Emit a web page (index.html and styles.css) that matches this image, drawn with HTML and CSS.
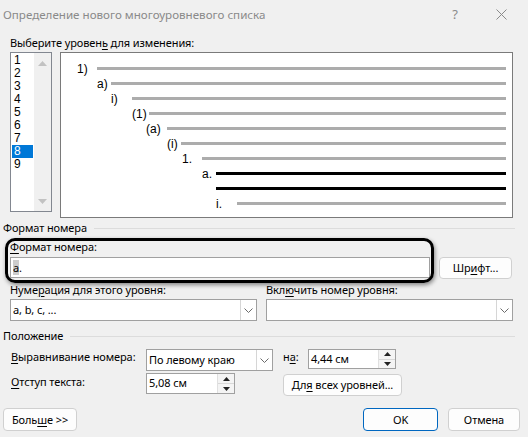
FILE: index.html
```html
<!DOCTYPE html>
<html lang="ru">
<head>
<meta charset="utf-8">
<title>Определение нового многоуровневого списка</title>
<link rel="stylesheet" href="styles.css">
</head>
<body>
<div class="window">
  <div class="titlebar">
    <span class="title">Определение нового многоуровневого списка</span>
    <span class="tb-btn">?</span>
    <span class="tb-btn"><svg width="11" height="11" viewBox="0 0 11 11"><path d="M0.5 0.5L10.5 10.5M10.5 0.5L0.5 10.5" stroke="#8a8a8a" stroke-width="1" fill="none"/></svg></span>
  </div>

  <div class="lbl lbl-top">Выберите уровен<u>ь</u> для изменения:</div>
  <div class="level-row">
    <div class="listbox">
      <ul class="levels">
        <li>1</li><li>2</li><li>3</li><li>4</li><li>5</li><li>6</li><li>7</li><li class="sel">8</li><li>9</li>
      </ul>
      <div class="vscroll">
        <svg width="9" height="5" viewBox="0 0 9 5"><path d="M0 5L4.5 0L9 5Z" fill="#c2c2c2"/></svg>
        <svg width="9" height="5" viewBox="0 0 9 5"><path d="M0 0L4.5 5L9 0Z" fill="#c2c2c2"/></svg>
      </div>
    </div>
    <div class="preview">
      <div class="prow p1"><span class="ptxt">1)</span><span class="pline"></span></div>
      <div class="prow p2"><span class="ptxt">a)</span><span class="pline"></span></div>
      <div class="prow p3"><span class="ptxt">i)</span><span class="pline"></span></div>
      <div class="prow p4"><span class="ptxt">(1)</span><span class="pline"></span></div>
      <div class="prow p5"><span class="ptxt">(a)</span><span class="pline"></span></div>
      <div class="prow p6"><span class="ptxt">(i)</span><span class="pline"></span></div>
      <div class="prow p7"><span class="ptxt">1.</span><span class="pline"></span></div>
      <div class="prow p8"><span class="ptxt">a.</span><span class="pline dark"></span></div>
      <div class="prow p9"><span class="ptxt"></span><span class="pline dark"></span></div>
      <div class="prow p10"><span class="ptxt">i.</span><span class="pline"></span></div>
    </div>
  </div>

  <div class="group">Формат номера</div>
  <div class="lbl lbl-fmt"><u>Ф</u>ормат номера:</div>
  <div class="fmt-row">
    <div class="textbox wide"><span class="selected">a</span>.</div>
    <button class="btn btn-font">Шр<u>и</u>фт...</button>
  </div>
  <div class="two-col">
    <div class="lbl">Нуме<u>р</u>ация для этого уровня:</div>
    <div class="lbl">Вкл<u>ю</u>чить номер уровня:</div>
    <div class="combo"><span class="combo-text">a, b, c, ...</span><span class="combo-btn"><svg width="9" height="5" viewBox="0 0 9 5"><path d="M0.5 0.5L4.5 4.5L8.5 0.5" stroke="#6a6a6a" fill="none"/></svg></span></div>
    <div class="combo"><span class="combo-text"></span><span class="combo-btn"><svg width="9" height="5" viewBox="0 0 9 5"><path d="M0.5 0.5L4.5 4.5L8.5 0.5" stroke="#6a6a6a" fill="none"/></svg></span></div>
  </div>

  <div class="group group-pos">Положение</div>
  <div class="pos-grid">
    <div class="lbl"><u>В</u>ыравнивание номера:</div>
    <div class="combo combo-align"><span class="combo-text">По левому краю</span><span class="combo-btn"><svg width="9" height="5" viewBox="0 0 9 5"><path d="M0.5 0.5L4.5 4.5L8.5 0.5" stroke="#6a6a6a" fill="none"/></svg></span></div>
    <div class="lbl lbl-at">н<u>а</u>:</div>
    <div class="spin spin-at"><span class="spin-text">4,44 см</span><span class="spin-btns"><span class="spin-up"><svg width="7" height="4" viewBox="0 0 7 4"><path d="M0 4L3.5 0L7 4Z" fill="#222"/></svg></span><span class="spin-down"><svg width="7" height="4" viewBox="0 0 7 4"><path d="M0 0L3.5 4L7 0Z" fill="#222"/></svg></span></span></div>
    <div class="lbl lbl-row2"><u>О</u>тступ текста:</div>
    <div class="spin spin-indent"><span class="spin-text">5,08 см</span><span class="spin-btns"><span class="spin-up"><svg width="7" height="4" viewBox="0 0 7 4"><path d="M0 4L3.5 0L7 4Z" fill="#222"/></svg></span><span class="spin-down"><svg width="7" height="4" viewBox="0 0 7 4"><path d="M0 0L3.5 4L7 0Z" fill="#222"/></svg></span></span></div>
    <button class="btn btn-all">Дл<u>я</u> всех уровней...</button>
  </div>

  <div class="bottom-row">
    <button class="btn btn-more">Боль<u>ш</u>е &gt;&gt;</button>
    <button class="btn btn-ok">OK</button>
    <button class="btn btn-cancel">Отмена</button>
  </div>

  <div class="callout"></div>
</div>
</body>
</html>
```
FILE: styles.css
```css
html, body {
  margin: 0;
  padding: 0;
}
body {
  width: 528px;
  height: 437px;
  overflow: hidden;
  background: #f0f0f0;
  font-family: "Noto Sans", "Segoe UI", sans-serif;
  font-size: 11px;
  letter-spacing: -0.1px;
  color: #000;
}
.window {
  position: relative;
  width: 528px;
  height: 437px;
}
u {
  text-underline-offset: 2px;
  text-decoration-thickness: 1px;
}
.titlebar {
  height: 28px;
  display: flex;
  align-items: center;
  padding: 0 4px 0 3px;
  color: #8a8a8a;
  font-size: 11.6px;
  letter-spacing: 0;
}
.title {
  flex: 1;
}
.tb-btn {
  width: 46px;
  display: flex;
  justify-content: center;
  align-items: center;
  font-size: 13px;
}
.lbl {
  line-height: 14px;
  height: 14px;
  white-space: nowrap;
}
.lbl-top {
  margin-top: 8px;
  padding-left: 10px;
}
.level-row {
  display: flex;
  align-items: flex-start;
  margin-top: 2px;
  padding-left: 10px;
}
.listbox {
  width: 42px;
  height: 160px;
  box-sizing: border-box;
  border: 1px solid #828790;
  background: #fff;
  display: flex;
}
.levels {
  list-style: none;
  margin: 0;
  padding: 1px 0 0 1px;
  width: 21px;
}
.levels li {
  height: 13px;
  line-height: 13px;
  padding-left: 2px;
  font-family: "Liberation Sans", sans-serif;
  font-size: 12px;
  letter-spacing: 0;
}
.levels li.sel {
  background: #0078d7;
  color: #fff;
}
.vscroll {
  margin-left: auto;
  width: 17px;
  background: #f0f0f0;
  display: flex;
  flex-direction: column;
  justify-content: space-between;
  align-items: center;
  padding: 8px 0 7px;
}
.preview {
  margin-left: 8px;
  width: 453px;
  height: 166px;
  box-sizing: border-box;
  border: 1px solid #7a7a7a;
  background: #fff;
  padding: 8px 6px 6px 0;
  font-family: "Liberation Sans", sans-serif;
  font-size: 12px;
  letter-spacing: 0;
}
.prow {
  height: 15px;
  display: flex;
  align-items: center;
}
.ptxt {
  flex: none;
}
.pline {
  flex: 1;
  height: 3px;
  background: #acacac;
}
.pline.dark {
  background: #000;
}
.p1 { padding-left: 16px; } .p1 .ptxt { width: 20px; }
.p2 { padding-left: 36px; } .p2 .ptxt { width: 14px; }
.p3 { padding-left: 50px; } .p3 .ptxt { width: 21px; }
.p4 { padding-left: 71px; } .p4 .ptxt { width: 17px; }
.p5 { padding-left: 85px; } .p5 .ptxt { width: 21px; }
.p6 { padding-left: 106px; } .p6 .ptxt { width: 14px; }
.p7 { padding-left: 121px; } .p7 .ptxt { width: 20px; }
.p8 { padding-left: 141px; } .p8 .ptxt { width: 14px; }
.p9 { padding-left: 155px; } .p9 .ptxt { width: 0; }
.p10 { padding-left: 155px; } .p10 .ptxt { width: 21px; }

.group {
  display: flex;
  align-items: center;
  height: 14px;
  line-height: 14px;
  margin-top: 3px;
  padding: 0 13px 0 3px;
  white-space: nowrap;
}
.group::after {
  content: "";
  flex: 1;
  height: 1px;
  background: #dcdcdc;
  margin-left: 7px;
}
.lbl-fmt {
  margin-top: 5px;
  padding-left: 10px;
}
.fmt-row {
  display: flex;
  align-items: flex-start;
  gap: 9px;
  margin-top: 3px;
  padding-left: 10px;
  height: 22px;
}
.textbox {
  box-sizing: border-box;
  height: 21px;
  border: 1px solid #a0a0a0;
  background: #fff;
  line-height: 19px;
  padding-left: 2px;
}
.textbox.wide {
  width: 420px;
}
.selected {
  background: #cccccc;
}
.btn {
  box-sizing: border-box;
  height: 22px;
  border: 1px solid #d0d0d0;
  border-radius: 4px;
  background: #fdfdfd;
  font: inherit;
  letter-spacing: inherit;
  color: #000;
  padding: 0;
  text-align: center;
  line-height: 20px;
}
.btn-font {
  width: 73px;
}
.two-col {
  display: grid;
  grid-template-columns: 247px 247px;
  column-gap: 9px;
  row-gap: 2px;
  margin-top: 4px;
  padding-left: 10px;
}
.combo {
  box-sizing: border-box;
  height: 22px;
  border: 1px solid #a0a0a0;
  background: #fff;
  display: flex;
  align-items: stretch;
}
.combo-text {
  flex: 1;
  line-height: 20px;
  padding-left: 2px;
  white-space: nowrap;
}
.combo-btn {
  width: 15px;
  border-left: 1px solid #d6d6d6;
  display: flex;
  align-items: center;
  justify-content: center;
}
.group-pos {
  margin-top: 8px;
}
.pos-grid {
  display: grid;
  grid-template-columns: 135px 127px 35px 94px;
  column-gap: 0;
  row-gap: 2px;
  grid-template-rows: 22px 23px;
  align-items: start;
  margin-top: 6px;
  padding-left: 11px;
}
.pos-grid .lbl {
  padding-top: 1px;
}
.lbl-at {
  padding-left: 10px;
}
.combo-align {
  width: 127px;
}
.spin {
  box-sizing: border-box;
  border: 1px solid #a0a0a0;
  background: #fff;
  display: flex;
  align-items: stretch;
}
.spin-at {
  width: 88px;
  height: 20px;
}
.spin-indent {
  width: 89px;
  height: 21px;
}
.spin-text {
  flex: 1;
  padding-left: 2px;
  line-height: 18px;
}
.spin-btns {
  width: 16px;
  display: flex;
  flex-direction: column;
  border-left: 1px solid #e0e0e0;
  background: #f4f4f4;
}
.spin-up, .spin-down {
  flex: 1;
  display: flex;
  align-items: center;
  justify-content: center;
}
.spin-up {
  border-bottom: 1px solid #d8d8d8;
}
.lbl-row2 {
  padding-top: 2px !important;
}
.btn-all {
  grid-column: 3 / span 2;
  width: 119px;
  margin-top: 1px;
  margin-left: 10px;
}
.bottom-row {
  display: flex;
  align-items: flex-start;
  margin-top: 12px;
  padding: 0 8px 0 3px;
}
.btn-more {
  width: 74px;
  height: 23px;
}
.btn-ok {
  margin-left: auto;
  width: 75px;
  height: 23px;
  border-color: #0067c0;
}
.btn-cancel {
  margin-left: 10px;
  width: 72px;
  height: 23px;
}
.callout {
  position: absolute;
  left: 5px;
  top: 238px;
  width: 429px;
  height: 45px;
  box-sizing: border-box;
  border: 3px solid #000;
  border-radius: 10px;
  box-shadow: 1px 2px 4px rgba(0, 0, 0, 0.45);
  pointer-events: none;
}
```
